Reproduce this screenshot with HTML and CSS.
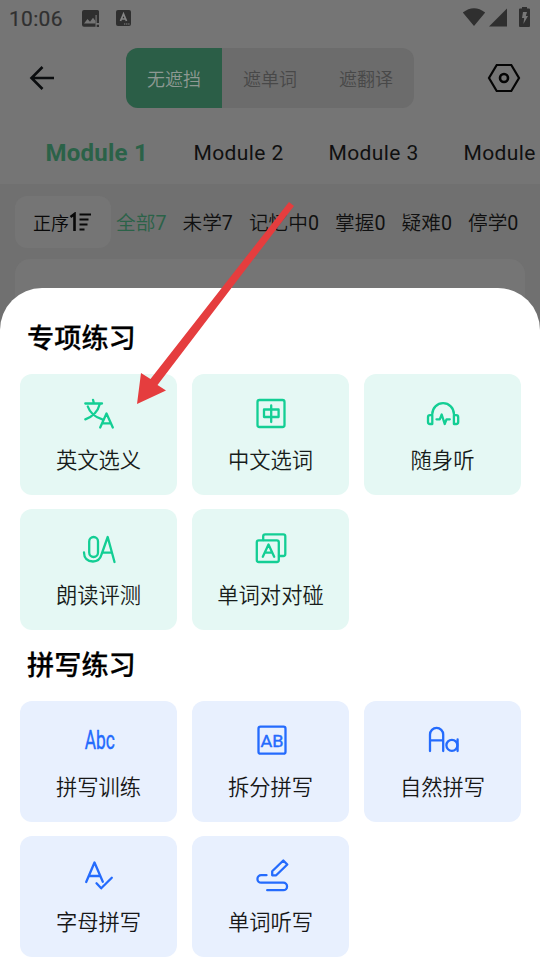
FILE: index.html
```html
<!DOCTYPE html>
<html lang="zh-CN">
<head>
<meta charset="utf-8">
<title>专项练习</title>
<link rel="stylesheet" href="styles.css">
</head>
<body>
<div class="screen">
  <header class="header">
    <div class="status">
      <span class="time">10:06</span>
      <svg class="st-image" width="20" height="20" viewBox="0 0 20 20"><path fill="#2f2f2f" d="M3 1H16.500A1.500 1.500 0 0 1 18 2.500V6H14.500V17.800H3A2 2 0 0 1 1 15.800V3A2 2 0 0 1 3 1ZM15.700 6H18V14H15.700ZM15.700 15.700H18V18H15.700Z"/><path fill="#757575" d="M3 14.500 6.500 10 9 12.700 12 8.700 14.500 12V14.500Z"/></svg>
      <svg class="st-app" width="15" height="16" viewBox="0 0 15 16"><rect width="15" height="16" rx="2" fill="#2f2f2f"/><path d="M4.500 11 7.500 4 10.500 11M5.500 9H9.500" fill="none" stroke="#858585" stroke-width="1.700"/><path d="M8 14h1.300m.8 0h1.300m.8 0h1.300" stroke="#858585" stroke-width="1.200"/></svg>
      <svg class="st-right" width="70" height="22" viewBox="0 0 70 22"><path fill="#2f2f2f" d="M.8 5.500Q12 -3 23.200 5.500L12 19ZM27 19.500H45V1.500ZM60 0h5v1.500h2a1 1 0 0 1 1 1V19a1 1 0 0 1-1 1H58a1 1 0 0 1-1-1V2.500a1 1 0 0 1 1-1h2Z"/><path fill="#777" d="M61 5h4l-1.200 4H66l-4.600 8 .8-6H60Z"/></svg>
    </div>
    <div class="toolbar">
      <svg class="back" width="26" height="26" viewBox="0 0 26 26"><path d="M25 13H2.500M13.500 2 2.500 13l11 11" fill="none" stroke="#0b0d0f" stroke-width="2.600"/></svg>
      <div class="segments"><span class="seg on">无遮挡</span><span class="seg">遮单词</span><span class="seg">遮翻译</span></div>
      <svg class="gear" width="34" height="30" viewBox="0 0 34 30"><path d="M9.700 2H24.300L32 15 24.300 28H9.700L2 15Z" fill="none" stroke="#050505" stroke-width="2.200"/><circle cx="17" cy="15" r="4" fill="none" stroke="#050505" stroke-width="2.600"/></svg>
    </div>
    <nav class="tabs"><span class="tab active">Module 1</span><span class="tab">Module 2</span><span class="tab">Module 3</span><span class="tab">Module</span></nav>
  </header>
  <div class="filters">
    <div class="sort">正序<svg width="22" height="20" viewBox="0 0 22 20"><path d="M1.500 5 5.500 2V19" fill="none" stroke="#080808" stroke-width="2.600"/><path d="M10.500 2.500H22M10.500 7.500H19.500M10.500 12.500H18.500M10.500 17.500H15.500" stroke="#080808" stroke-width="2"/></svg></div>
    <div class="states"><span class="current">全部<b>7</b></span><span>未学<b>7</b></span><span>记忆中<b>0</b></span><span>掌握<b>0</b></span><span>疑难<b>0</b></span><span>停学<b>0</b></span></div>
  </div>
  <div class="word-card"></div>

  <section class="sheet">
    <h2>专项练习</h2>
    <div class="grid green">
      <div class="card"><svg class="icon" viewBox="0 0 40 40"><path d="M14 5.800l.9 3.500M6.300 9.500H23M8.800 12.500Q12 22 23.300 25.300M20.800 10Q18 21 6.300 25.300M21.200 33.500 27.500 19.500 33.800 33.500M23.300 29.400H31.700"/></svg><span>英文选义</span></div>
      <div class="card"><svg class="icon" viewBox="0 0 40 40"><rect x="6.500" y="6" width="27" height="27" rx="2"/><path d="M13 15.500H27.600V23H13ZM20.200 11.500V28"/></svg><span>中文选词</span></div>
      <div class="card"><svg class="icon" viewBox="0 0 40 40"><path d="M9.300 20.500V20A10.800 10.800 0 0 1 30.900 20V20.500M9.300 21.200V30H7A2 2 0 0 1 5 28V23.200A2 2 0 0 1 7 21.200ZM30.900 21.200V30H33.200A2 2 0 0 0 35.200 28V23.200A2 2 0 0 0 33.200 21.200ZM13.500 25.300H16.800L18.700 20.500 21.700 30 23.500 25.300H26.800"/></svg><span>随身听</span></div>
      <div class="card"><svg class="icon" viewBox="0 0 40 40"><rect x="10.200" y="8" width="8.800" height="20" rx="4.400"/><path d="M5 23.500C5 29 8.500 32.500 14 32.500 19 32.500 21.300 30 22.500 25.500L28.700 8 35.500 33M23.800 23.700H32.500"/></svg><span>朗读评测</span></div>
      <div class="card"><svg class="icon" viewBox="0 0 40 40"><rect x="5.800" y="11.300" width="22" height="21.700" rx="2"/><path d="M12.200 11V7.300A2 2 0 0 1 14.200 5.300H32.300A2 2 0 0 1 34.300 7.300V25A2 2 0 0 1 32.300 27H28M11.800 27.700 17.500 15.500 23.200 27.700M13.800 23.700H21.200"/></svg><span>单词对对碰</span></div>
    </div>
    <h2>拼写练习</h2>
    <div class="grid blue">
      <div class="card"><svg class="icon" viewBox="0 0 40 40"><text x="5.700" y="28.300" font-size="25.500" textLength="30" lengthAdjust="spacingAndGlyphs">Abc</text></svg><span>拼写训练</span></div>
      <div class="card"><svg class="icon" viewBox="0 0 40 40"><rect x="7.500" y="5.700" width="27" height="27" rx="2"/><text x="9.500" y="25.700" font-size="17" textLength="23" lengthAdjust="spacingAndGlyphs">AB</text></svg><span>拆分拼写</span></div>
      <div class="card"><svg class="icon" viewBox="0 0 40 40"><path d="M7 30V13.500A6.600 6.600 0 0 1 20.200 13.500V30M7 19.300H20.200M34.600 18.500V30"/><circle cx="28.900" cy="24.300" r="5.500"/></svg><span>自然拼写</span></div>
      <div class="card"><svg class="icon" viewBox="0 0 40 40"><path d="M7.200 26 15.500 6.500 23.800 25.700M10 20H21M17.500 27.300 22.200 32.300 32.800 21.700"/></svg><span>字母拼写</span></div>
      <div class="card"><svg class="icon" viewBox="0 0 40 40"><path d="M15.500 19.200H10.200A3.700 3.700 0 0 0 10.200 26.700H32.300A3.700 3.700 0 0 1 32.300 34.200H16.200M21.200 19.300V15.300L32.300 4.500 36.300 8.500 25.200 19.300Z"/></svg><span>单词听写</span></div>
    </div>
  </section>
  <svg class="pointer" width="160" height="206" viewBox="0 0 160 206"><path fill="#e53d3e" d="M154 2 159 6 22.500 185 31 190.500 2 204 6 173 15.500 179Z"/></svg>
</div>
</body>
</html>
```
FILE: styles.css
```css
* { box-sizing: border-box; }
body { margin: 0; font-family: Roboto, "Noto Sans CJK SC", sans-serif; }
.screen { position: relative; width: 540px; height: 960px; overflow: hidden; background: #707070; }
.header { height: 184px; background: #757575; }
.status { display: flex; align-items: flex-start; height: 38px; padding: 0 8px 0 9px; }
.time { width: 72px; margin-top: 7px; font-size: 21px; line-height: 24px; letter-spacing: .3px; color: #303030; -webkit-text-stroke: .2px #303030; }
.st-image { margin-top: 9px; }
.st-app { margin: 10px 0 0 15px; }
.st-right { margin: 7px 0 0 auto; }
.toolbar { display: flex; align-items: center; height: 80px; padding: 0 19px 0 29px; }
.segments { display: flex; width: 288px; height: 60px; margin-left: 71px; border-radius: 12px; overflow: hidden; background: #6c6c6c; }
.seg { flex: 1; text-align: center; font: 350 18px/60px "Noto Sans CJK SC", sans-serif; color: #484848; }
.seg.on { background: #2b5e47; color: #8e9993; }
.gear { margin-left: auto; }
.tabs { display: flex; height: 66px; padding-left: 23px; overflow: hidden; }
.tab { flex: none; width: 135px; padding-left: 22.5px; font-size: 21px; line-height: 70px; letter-spacing: .4px; white-space: nowrap; color: #101010; }
.tab.active { width: 148px; font-size: 24px; font-weight: 700; letter-spacing: .25px; color: #2b6248; }
.filters { display: flex; align-items: center; height: 75px; padding: 1px 0 0 15px; }
.sort { display: flex; align-items: center; width: 96px; height: 52px; padding-left: 18px; border-radius: 12px; background: #757575; font: 350 18px/52px "Noto Sans CJK SC", sans-serif; color: #080808; }
.states { display: flex; gap: 16px; margin: 4px 0 0 5px; font: 350 19.7px/50px Roboto, "Noto Sans CJK SC", sans-serif; color: #101010; white-space: nowrap; }
.states b { font-weight: 400; }
.current { color: #2b6248; }
.word-card { height: 100px; margin: 0 15px; border-radius: 15px; background: #757575; }
.sheet { position: absolute; inset: 288px 0 0; padding: 26px 19px 0 20px; border-radius: 42px 42px 0 0; background: #fff; }
h2 { height: 45px; margin: 0 0 15px 7px; font: 500 27.2px/45px "Noto Sans CJK SC", sans-serif; color: #000; -webkit-text-stroke: .25px #000; }
.grid { display: grid; grid-template-columns: repeat(3, 157px); grid-auto-rows: 121px; gap: 14px 15px; margin-bottom: 11px; }
.card { display: flex; flex-direction: column; align-items: center; padding-top: 20px; border-radius: 12px; font: 350 21.3px/32px "Noto Sans CJK SC", sans-serif; color: #171717; }
.card span { margin-top: 9px; }
.green .card { background: #e5f8f4; color: #171c1a; }
.blue .card { background: #e8f0fe; }
.icon { width: 40px; height: 40px; overflow: visible; fill: none; stroke-width: 2.3; stroke-linecap: round; stroke-linejoin: round; }
.green .icon { stroke: #13ce94; }
.blue .icon { stroke: #246bfd; }
.icon text { font-family: Roboto, sans-serif; font-weight: 400; fill: #246bfd; stroke-width: .4; }
.pointer { position: absolute; left: 135px; top: 200px; }
```
